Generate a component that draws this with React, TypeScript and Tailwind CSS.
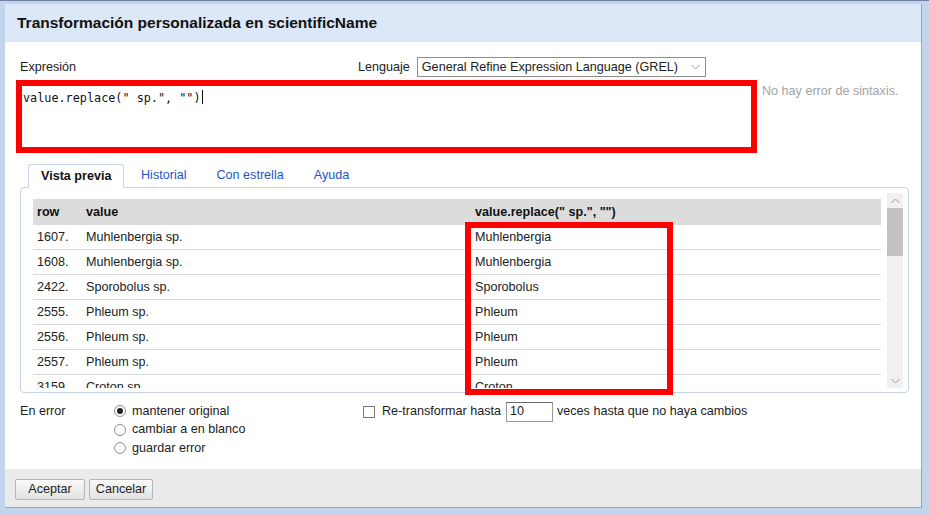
import React from "react";

const ROWS = [
  { row: "1607.", value: "Muhlenbergia sp.", out: "Muhlenbergia" },
  { row: "1608.", value: "Muhlenbergia sp.", out: "Muhlenbergia" },
  { row: "2422.", value: "Sporobolus sp.", out: "Sporobolus" },
  { row: "2555.", value: "Phleum sp.", out: "Phleum" },
  { row: "2556.", value: "Phleum sp.", out: "Phleum" },
  { row: "2557.", value: "Phleum sp.", out: "Phleum" },
  { row: "3159.", value: "Croton sp.", out: "Croton" },
];

const TABS = ["Vista previa", "Historial", "Con estrella", "Ayuda"];

const ERROR_OPTIONS = [
  { label: "mantener original", checked: true },
  { label: "cambiar a en blanco", checked: false },
  { label: "guardar error", checked: false },
];

function Chevron({ up = false, className = "" }: { up?: boolean; className?: string }) {
  return (
    <svg width="9" height="6" viewBox="0 0 9 6" className={className}>
      <path d={up ? "M0.5 5 L4.5 1 L8.5 5" : "M0.5 1 L4.5 5 L8.5 1"} fill="none" stroke="#9a9a9a" strokeWidth="1" />
    </svg>
  );
}

function Radio({ checked }: { checked: boolean }) {
  return (
    <span className="flex h-[12px] w-[12px] items-center justify-center rounded-full border border-[#8e8e8e] bg-white">
      {checked && <span className="h-[6px] w-[6px] rounded-full bg-[#222]" />}
    </span>
  );
}

export default function App() {
  return (
    <div
      className="flex h-[515px] w-[929px] flex-col overflow-hidden border-t border-[#6f819c] bg-[#c3d5ec] pb-[7px] pl-[5px] pr-[7px] pt-[3px] text-[12.6px] text-[#222]"
      style={{ fontFamily: '"Liberation Sans", Arial, sans-serif' }}
    >
      <div className="flex flex-1 flex-col border-b border-r border-[#8fa6c4] bg-white">
        {/* title bar */}
        <div className="flex h-[38px] shrink-0 items-center bg-[#dce8f8] pl-[12px]">
          <span className="text-[15.5px] font-bold text-[#111]">Transformación personalizada en scientificName</span>
        </div>

        {/* body */}
        <div className="relative flex flex-1 flex-col pl-[11px] pt-[15px]">
          <div className="flex h-[20px] items-center">
            <span className="w-[342px] pl-[4px]">Expresión</span>
            <span>Lenguaje</span>
            <div className="ml-[7px] flex h-[20px] w-[289px] items-center justify-between border border-[#8c8c8c] pl-[4px] pr-[5px]">
              <span>General Refine Expression Language (GREL)</span>
              <Chevron className="ml-[2px]" />
            </div>
          </div>

          <div className="mt-[3px] flex">
            <div className="h-[73px] w-[741px] border-[6px] border-[#fe0000] pl-[1px] pt-[2px]">
              <span className="text-[11.8px] text-[#111]" style={{ fontFamily: '"DejaVu Sans Mono", "Liberation Mono", monospace' }}>
                value.replace(" sp.", "")
                <span className="ml-[1px] inline-block h-[14px] w-px translate-y-[2px] bg-[#111]" />
              </span>
            </div>
            <span className="ml-[5px] mt-[2px] text-[#a3a3a3]">No hay error de sintaxis.</span>
          </div>

          {/* tabs */}
          <div className="ml-[4px] mt-[11px] flex w-[889px] flex-col">
            <div className="flex h-[23px] items-stretch pl-[8px]">
              {TABS.map((t, i) =>
                i === 0 ? (
                  <div key={t} className="relative z-10 -mb-px flex w-[96px] items-center rounded-t-[3px] border border-b-0 border-[#c3d3ea] bg-white pl-[12px] font-bold text-[#111]">
                    {t}
                  </div>
                ) : (
                  <div key={t} className={`flex items-center ${i === 1 ? "pl-[17px]" : "pl-[30px]"} text-[#1f55c4]`}>
                    {t}
                  </div>
                )
              )}
            </div>
            <div className="flex h-[206px] rounded-[4px] border border-[#c3d3ea] pb-[4px] pl-[12px] pr-[5px] pt-[5px]">
              <div className="h-[195px] w-[848px] overflow-hidden pt-[6px]">
                <div className="flex h-[26px] items-center bg-[#dcdcdc] font-bold text-[#111]">
                  <span className="w-[49px] pl-[4px]">row</span>
                  <span className="w-[389px] pl-[4px]">value</span>
                  <span className="pl-[4px]">value.replace(" sp.", "")</span>
                </div>
                {ROWS.map((r) => (
                  <div key={r.row} className="flex h-[25px] items-center border-b border-[#d9d9d9]">
                    <span className="w-[49px] pl-[4px]">{r.row}</span>
                    <span className="w-[389px] pl-[4px]">{r.value}</span>
                    <span className="pl-[4px]">{r.out}</span>
                  </div>
                ))}
              </div>
              <div className="ml-[6px] flex h-[195px] w-[16px] flex-col items-center bg-[#f0f0f0]">
                <div className="flex h-[15px] items-center">
                  <Chevron up />
                </div>
                <div className="h-[48px] w-[16px] bg-[#c2c2c2]" />
                <div className="flex-1" />
                <div className="flex h-[15px] items-center">
                  <Chevron />
                </div>
              </div>
            </div>
          </div>

          {/* options */}
          <div className="ml-[4px] mt-[9px] flex">
            <div className="w-[94px] leading-[19px]">En error</div>
            <div className="flex w-[249px] flex-col">
              {ERROR_OPTIONS.map((o) => (
                <div key={o.label} className="flex h-[18.5px] items-center gap-[6px]">
                  <Radio checked={o.checked} />
                  <span>{o.label}</span>
                </div>
              ))}
            </div>
            <div className="flex h-[19px] items-center">
              <span className="h-[12px] w-[12px] border border-[#777] bg-white" />
              <span className="ml-[7px]">Re-transformar hasta</span>
              <div className="ml-[5px] flex h-[20px] w-[47px] items-center border border-[#9a9a9a] border-t-[#6a6a6a] pl-[3px]">10</div>
              <span className="ml-[4px]">veces hasta que no haya cambios</span>
            </div>
          </div>

          {/* annotation box over the preview column */}
          <div className="absolute left-[460px] top-[180px] h-[173px] w-[208px] border-[6px] border-[#fe0000]" />
        </div>

        {/* footer */}
        <div className="flex h-[38px] shrink-0 items-start gap-[4px] bg-[#ebebeb] pl-[10px] pt-[10px]">
          <button className="h-[21px] w-[70px] rounded-[2px] border border-[#b5b5b5] bg-gradient-to-b from-[#fafafa] to-[#e2e2e2] text-[#222]">
            Aceptar
          </button>
          <button className="h-[21px] w-[64px] rounded-[2px] border border-[#b5b5b5] bg-gradient-to-b from-[#fafafa] to-[#e2e2e2] text-[#222]">
            Cancelar
          </button>
        </div>
      </div>
    </div>
  );
}
